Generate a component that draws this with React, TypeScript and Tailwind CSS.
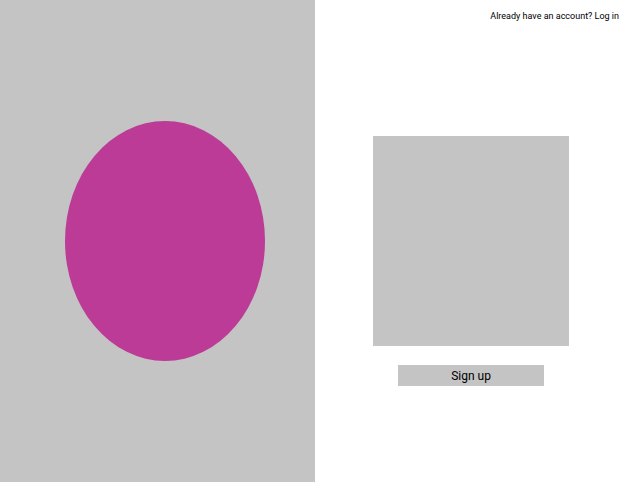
import React from 'react';

const App: React.FC = () => {
    return (
        <div className="flex h-[482px] w-[629px] bg-white font-['Roboto',sans-serif]">
            {/* Illustration side */}
            <div className="flex h-full w-[315px] items-center bg-[#c4c4c4] pl-[65px]">
                <div className="h-[240px] w-[200px] rounded-[50%] bg-[#bb3b97]"></div>
            </div>

            {/* Form side */}
            <div className="flex flex-1 flex-col">
                <div className="flex justify-end pr-[10px] pt-[11px] text-[9px] leading-[11px] text-black">
                    Already have an account? Log in
                </div>
                <div className="mt-[114px] flex flex-col items-center pr-[2px]">
                    <div className="h-[210px] w-[196px] bg-[#c4c4c4]"></div>
                    <button className="mt-[19px] flex h-[21px] w-[146px] items-center justify-center bg-[#c4c4c4] pt-[1px] text-[12px] text-black">
                        Sign up
                    </button>
                </div>
            </div>
        </div>
    );
};

export default App;
